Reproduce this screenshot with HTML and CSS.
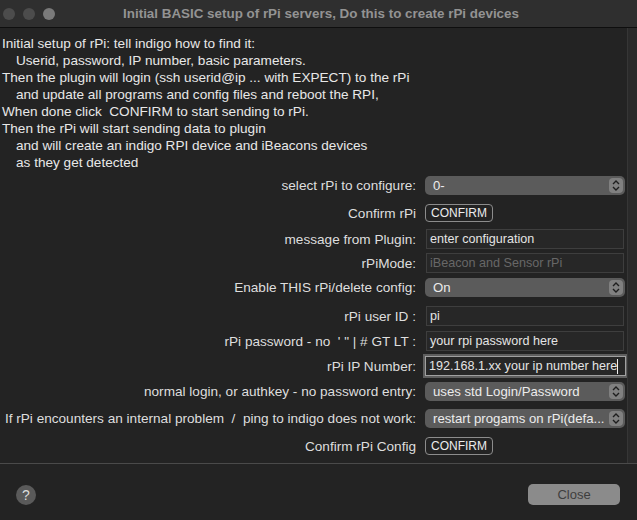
FILE: index.html
```html
<!DOCTYPE html>
<html lang="en">
<head>
    <meta charset="UTF-8">
    <title>Initial BASIC setup of rPi servers</title>
    <link rel="stylesheet" href="styles.css">
</head>
<body>
    <div class="window">
        <div class="titlebar">
            <div class="lights">
                <span class="light"></span>
                <span class="light"></span>
                <span class="light light-max"></span>
            </div>
            <div class="title">Initial BASIC setup of rPi servers, Do this to create rPi devices</div>
        </div>

        <div class="content">
            <div class="pane">
                <div class="intro">
                    <div>Initial setup of rPi: tell indigo how to find it:</div>
                    <div class="indent">Userid, password, IP number, basic parameters.</div>
                    <div>Then the plugin will login (ssh userid@ip ... with EXPECT) to the rPi</div>
                    <div class="indent">and update all programs and config files and reboot the RPI,</div>
                    <div>When done click &nbsp;CONFIRM to start sending to rPi.</div>
                    <div>Then the rPi will start sending data to plugin</div>
                    <div class="indent">and will create an indigo RPI device and iBeacons devices</div>
                    <div class="indent">as they get detected</div>
                </div>

                <div class="form">
                    <div class="row h28">
                        <label>select rPi to configure:</label>
                        <div class="popup"><span>0-</span><span class="stepper"><svg width="8" height="11" viewBox="0 0 8 11"><path d="M1 4 L4 1 L7 4 M1 7 L4 10 L7 7" fill="none" stroke="#1e1e1e" stroke-width="1.4"/></svg></span></div>
                    </div>
                    <div class="row h28">
                        <label>Confirm rPi</label>
                        <div><button class="confirm">CONFIRM</button></div>
                    </div>
                    <div class="row h24">
                        <label>message from Plugin:</label>
                        <div class="field">enter configuration</div>
                    </div>
                    <div class="row h24">
                        <label>rPiMode:</label>
                        <div class="field disabled">iBeacon and Sensor rPi</div>
                    </div>
                    <div class="row h24">
                        <label>Enable THIS rPi/delete config:</label>
                        <div class="popup"><span>On</span><span class="stepper"><svg width="8" height="11" viewBox="0 0 8 11"><path d="M1 4 L4 1 L7 4 M1 7 L4 10 L7 7" fill="none" stroke="#1e1e1e" stroke-width="1.4"/></svg></span></div>
                    </div>
                    <div class="row h24 gap-top">
                        <label>rPi user ID :</label>
                        <div class="field">pi</div>
                    </div>
                    <div class="row h26">
                        <label>rPi password - no &nbsp;' " | # GT LT :</label>
                        <div class="field">your rpi password here</div>
                    </div>
                    <div class="row h24">
                        <label>rPi IP Number:</label>
                        <div class="field focused">192.168.1.xx your ip number here<span class="caret"></span></div>
                    </div>
                    <div class="row h26">
                        <label>normal login, or authkey - no password entry:</label>
                        <div class="popup"><span>uses std Login/Password</span><span class="stepper"><svg width="8" height="11" viewBox="0 0 8 11"><path d="M1 4 L4 1 L7 4 M1 7 L4 10 L7 7" fill="none" stroke="#1e1e1e" stroke-width="1.4"/></svg></span></div>
                    </div>
                    <div class="row h28">
                        <label>If rPi encounters an internal problem &nbsp;/ &nbsp;ping to indigo does not work:</label>
                        <div class="popup"><span>restart progams on rPi(defa...</span><span class="stepper"><svg width="8" height="11" viewBox="0 0 8 11"><path d="M1 4 L4 1 L7 4 M1 7 L4 10 L7 7" fill="none" stroke="#1e1e1e" stroke-width="1.4"/></svg></span></div>
                    </div>
                    <div class="row h28">
                        <label>Confirm rPi Config</label>
                        <div><button class="confirm">CONFIRM</button></div>
                    </div>
                </div>
            </div>
            <div class="scrolltrack"></div>
        </div>

        <div class="footer">
            <button class="help">?</button>
            <button class="close">Close</button>
        </div>
    </div>
</body>
</html>
```

FILE: styles.css
```css
body {
    margin: 0;
    background: #232323;
    font-family: "Liberation Sans", Arial, sans-serif;
    font-size: 13.6px;
    color: #e4e4e4;
}
.window {
    width: 637px;
    height: 520px;
    display: flex;
    flex-direction: column;
    background: #232323;
    overflow: hidden;
}
.titlebar {
    height: 27px;
    flex-shrink: 0;
    background: #2f2f2f;
    border-bottom: 1px solid #0e0e0e;
    display: flex;
    align-items: center;
}
.lights {
    display: flex;
    gap: 8px;
    padding-left: 3px;
}
.light {
    width: 12px;
    height: 12px;
    border-radius: 50%;
    background: #4c4c4c;
}
.light-max {
    background: #7a7a7a;
}
.title {
    flex: 1;
    text-align: center;
    font-weight: bold;
    font-size: 13.4px;
    color: #939393;
    padding-right: 50px;
}
.content {
    height: 435px;
    display: flex;
    border-bottom: 1px solid #4a4a4a;
}
.pane {
    flex: 1;
    padding-top: 7px;
}
.scrolltrack {
    width: 9px;
    background: #2a2a2a;
    border-left: 1px solid #363636;
}
.intro {
    line-height: 17px;
    padding-left: 2px;
    color: #e8e8e8;
}
.indent {
    padding-left: 14px;
}
.row {
    display: grid;
    grid-template-columns: 416px 200px;
    column-gap: 9px;
    align-items: center;
}
.h24 { height: 24px; }
.h26 { height: 26px; }
.h28 { height: 28px; }
.gap-top { margin-top: 5px; }
label {
    text-align: right;
    color: #dedede;
    white-space: nowrap;
}
.popup {
    height: 19px;
    background: #5b5b5b;
    border-radius: 5px;
    display: flex;
    align-items: center;
    justify-content: space-between;
    padding-left: 8px;
    padding-right: 2px;
    color: #ececec;
    font-size: 13.2px;
    white-space: nowrap;
}
.stepper {
    width: 14px;
    height: 15px;
    background: #808080;
    border-radius: 4px;
    display: flex;
    align-items: center;
    justify-content: center;
}
.field {
    height: 18px;
    line-height: 18px;
    background: #272727;
    border: 1px solid #3e3e3e;
    padding-left: 3px;
    color: #e4e4e4;
    margin-left: 1px;
    width: 193px;
    font-size: 12.6px;
    white-space: nowrap;
    overflow: hidden;
}
.field.disabled {
    color: #676767;
}
.field.focused {
    border: 1px solid #a0a0a0;
    box-shadow: 0 0 0 2px #5e5e5e;
    margin-left: 0;
    width: 196px;
}
.caret {
    display: inline-block;
    width: 1px;
    height: 15px;
    background: #f0f0f0;
    vertical-align: middle;
}
button {
    font-family: "Liberation Sans", Arial, sans-serif;
    cursor: pointer;
}
.confirm {
    background: transparent;
    border: 1px solid #8c8c8c;
    border-radius: 4px;
    color: #ececec;
    font-size: 12px;
    height: 18px;
    padding: 0 5px;
    line-height: 16px;
}
.footer {
    flex: 1;
    display: flex;
    align-items: center;
    justify-content: space-between;
    padding: 5px 17px 0 16px;
}
.help {
    width: 20px;
    height: 20px;
    border-radius: 50%;
    border: none;
    background: #5a5a5a;
    color: #dcdcdc;
    font-size: 14px;
    padding: 0;
}
.close {
    width: 92px;
    height: 21px;
    border: none;
    border-radius: 5px;
    background: #8b8b8b;
    color: #3e3e3e;
    font-size: 13px;
}
```
